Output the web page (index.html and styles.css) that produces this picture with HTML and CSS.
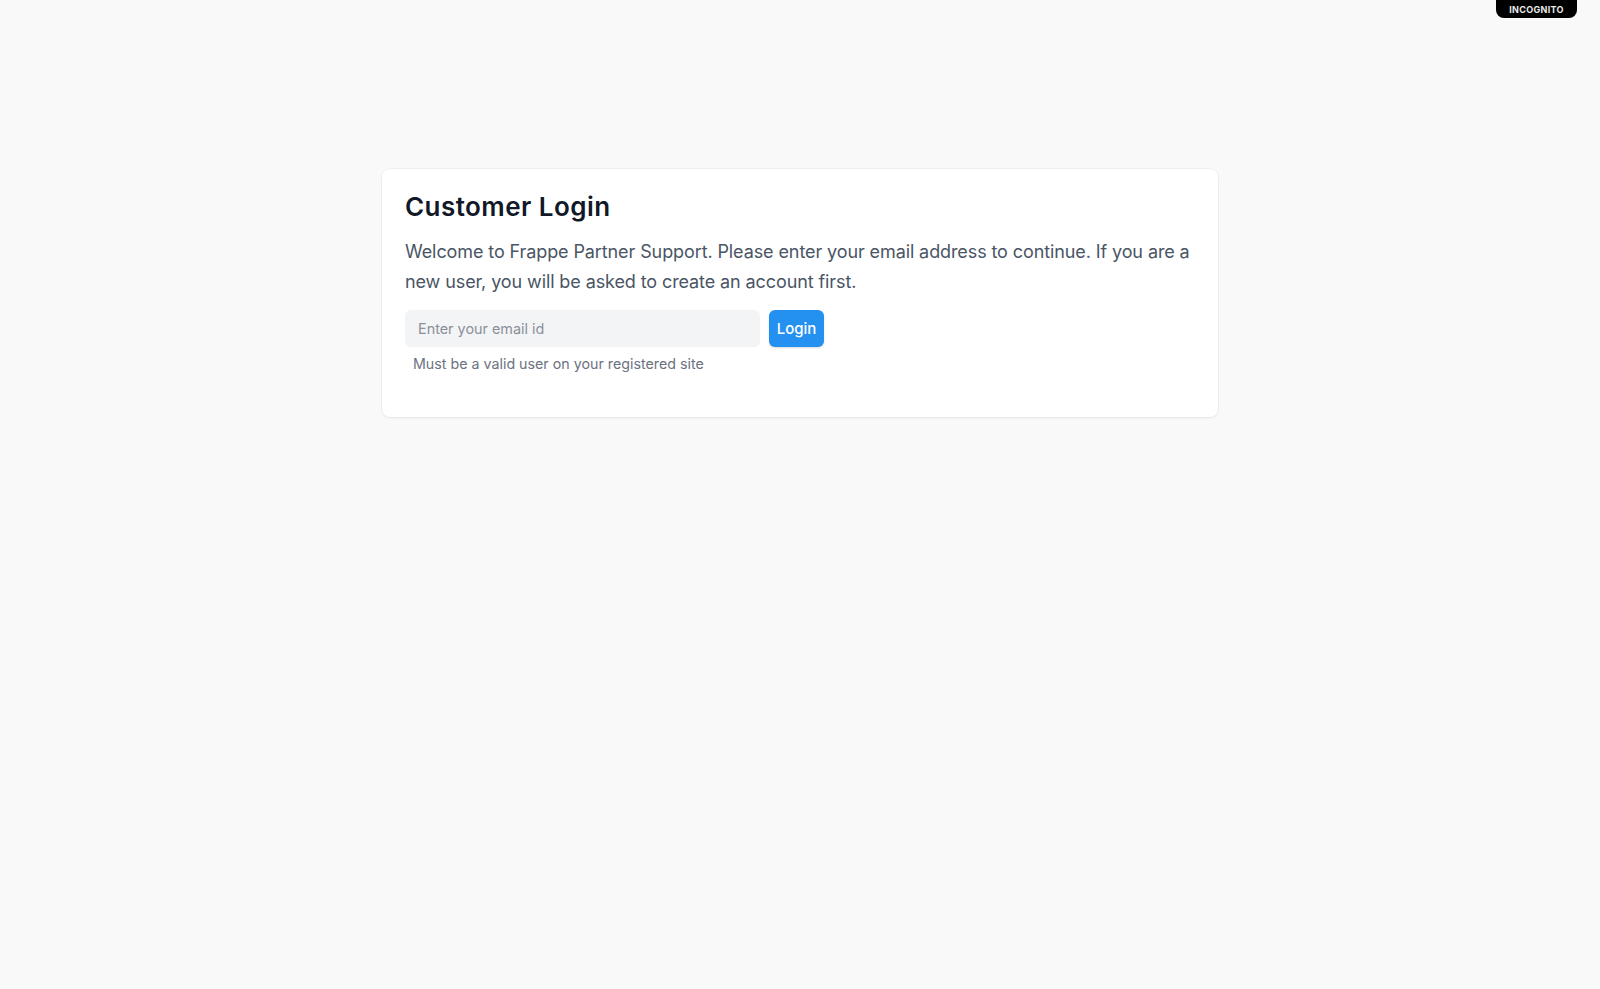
FILE: index.html
```html
<!DOCTYPE html>
<html>
<head>
<meta charset="utf-8">
<link rel="stylesheet" href="styles.css">
</head>
<body>
<div class="incognito">INCOGNITO</div>
<main class="page">
  <section class="card">
    <h1 class="title">Customer Login</h1>
    <p class="intro">Welcome to Frappe Partner Support. Please enter your email address to continue. If you are a new user, you will be asked to create an account first.</p>
    <div class="form-row">
      <input class="email" type="text" placeholder="Enter your email id">
      <button class="btn">Login</button>
    </div>
    <p class="help">Must be a valid user on your registered site</p>
  </section>
</main>
</body>
</html>
```
FILE: styles.css
```css
html, body {
  margin: 0;
  padding: 0;
}
body {
  background: #f8f9f8;
  font-family: Inter, "Noto Sans", sans-serif;
  color: #1f272e;
  min-height: 989px;
}
.incognito {
  position: absolute;
  top: 0;
  left: 1496px;
  width: 81px;
  height: 18px;
  background: #000;
  color: #e8e8e8;
  font-size: 9px;
  font-weight: 700;
  letter-spacing: 0.3px;
  border-radius: 0 0 8px 8px;
  display: flex;
  align-items: center;
  justify-content: center;
}
.page {
  display: flex;
  justify-content: center;
  padding-top: 169px;
}
.card {
  width: 836px;
  box-sizing: border-box;
  background: #fff;
  border-radius: 8px;
  box-shadow: 0 0 0 1px rgba(0,0,0,0.03), 0 1px 3px rgba(0,0,0,0.06);
  padding: 22px 22px 43px 23px;
}
.title {
  margin: 0;
  font-size: 26px;
  line-height: 32px;
  font-weight: 600;
  letter-spacing: 0.45px;
  color: #111827;
}
.intro {
  margin: 14px 0 0;
  font-size: 18px;
  line-height: 30px;
  letter-spacing: -0.1px;
  color: #4a5565;
}
.form-row {
  display: flex;
  gap: 9px;
  margin-top: 13px;
}
.email {
  width: 355px;
  height: 37px;
  box-sizing: border-box;
  border: none;
  outline: none;
  background: #f3f4f6;
  border-radius: 6px;
  padding: 0 13px;
  font-family: Inter, sans-serif;
  font-size: 14.4px;
  color: #374151;
}
.email::placeholder {
  color: #8a9099;
}
.btn {
  height: 37px;
  width: 55px;
  border: none;
  border-radius: 6px;
  background: #2490ef;
  color: #fff;
  font-family: Inter, sans-serif;
  font-size: 15px;
  font-weight: 500;
  padding: 0;
  box-shadow: 0 1px 2px rgba(0,0,0,0.15);
}
.help {
  margin: 7px 0 0 8px;
  font-size: 14.25px;
  line-height: 20px;
  color: #6b7280;
}
```
